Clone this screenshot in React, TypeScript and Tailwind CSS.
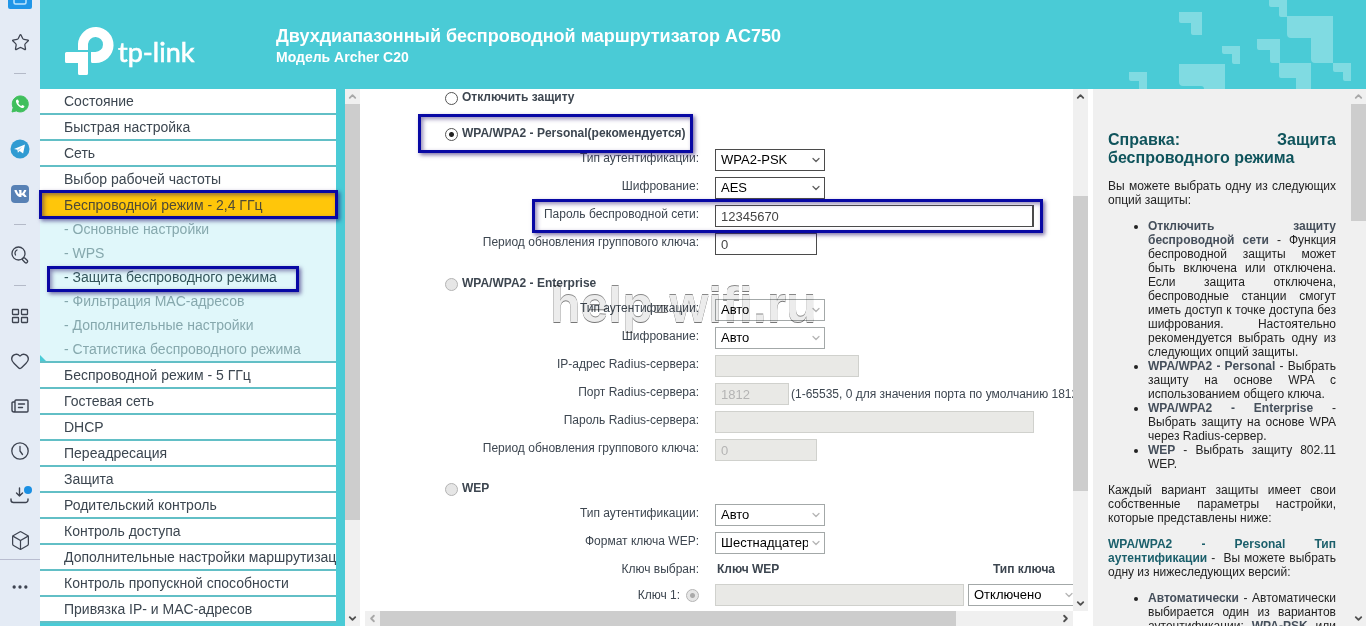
import React, { useId } from 'react';
import { Star, LayoutGrid, Heart, Clock, Box, Ellipsis, ChevronDown, ChevronUp, ChevronLeft, ChevronRight } from 'lucide-react';
import { FaVk } from 'react-icons/fa';

function RailButton({ label, children }: { label: string; children: React.ReactNode }) {
  return (
    <button type="button" aria-label={label} className="flex h-[45px] w-full shrink-0 items-center justify-center text-[#3d4350]">
      {children}
    </button>
  );
}

function RailDivider() {
  return (
    <div className="flex h-4 shrink-0 items-center justify-center">
      <div className="h-px w-3 bg-[#b4bac8]" />
    </div>
  );
}

function Rail() {
  return (
    <nav aria-label="Браузер" className="flex w-10 shrink-0 flex-col overflow-hidden bg-[#e4ebf5]">
      <div className="flex h-5 shrink-0 justify-center">
        <svg width="24" height="10" viewBox="0 0 24 10">
          <path d="M0 0h24v7a2 2 0 0 1-2 2H2a2 2 0 0 1-2-2z" fill="#2196e8" />
          <path d="M6 0v2.500a1.500 1.500 0 0 0 1.500 1.500h9A1.500 1.500 0 0 0 18 2.500V0" fill="none" stroke="#bfe6ff" strokeWidth="1.500" />
        </svg>
      </div>
      <RailButton label="Закладки"><Star size={19} strokeWidth={1.6} /></RailButton>
      <RailDivider />
      <RailButton label="WhatsApp">
        <svg width="18" height="18" viewBox="0 0 18 18">
          <path d="M1 17l1.200-4.300A8 8 0 1 1 5.300 15.900z" fill="#3fbf5c" stroke="#3fbf5c" strokeLinejoin="round" />
          <path d="M6 4.600c-.9.500-1.300 1.500-.9 2.700.9 2.700 2.900 4.700 5.600 5.600 1.200.4 2.200-.1 2.600-1.200l.1-.7-2.100-1.100-1.100 1.100c-1.400-.6-2.400-1.600-3-3l.9-1.100-1-2.200z" fill="#fff" />
        </svg>
      </RailButton>
      <RailButton label="Telegram">
        <svg width="20" height="20" viewBox="0 0 20 20">
          <circle cx="10" cy="10" r="9.500" fill="#309bd2" />
          <path d="M4 9.900L15 5.500l-1.900 9-3.500-2.400-1.700 1.700-.5-3z" fill="#fff" />
          <path d="M7.500 10.900l4.700-3.200-3.500 4z" fill="#a9d3ec" />
        </svg>
      </RailButton>
      <RailButton label="VK">
        <span className="flex size-[18px] items-center justify-center rounded bg-[#5781b5] text-white"><FaVk size={13} /></span>
      </RailButton>
      <RailDivider />
      <RailButton label="Поиск">
        <svg width="18" height="18" viewBox="0 0 18 18" fill="none" stroke="currentColor" strokeWidth="1.300" strokeLinecap="round">
          <circle cx="7.500" cy="7.500" r="6.500" />
          <path d="M4.500 9a3.500 3.500 0 0 1 1.500-5" />
          <rect x="11" y="12.800" width="6" height="3" rx="1.500" transform="rotate(45 14 14.300)" />
        </svg>
      </RailButton>
      <RailDivider />
      <RailButton label="Экспресс-панель">
        <svg width="18" height="16" viewBox="0 0 18 16" fill="none" stroke="currentColor" strokeWidth="1.300">
          <rect x="1.500" y="1.500" width="6" height="5" rx="0.500" />
          <rect x="10.500" y="1.500" width="6" height="5" rx="0.500" />
          <rect x="1.500" y="9.500" width="6" height="5" rx="0.500" />
          <rect x="10.500" y="9.500" width="6" height="5" rx="0.500" />
        </svg>
      </RailButton>
      <RailButton label="Избранное"><Heart size={20} strokeWidth={1.6} /></RailButton>
      <RailButton label="Новости">
        <svg width="18" height="14" viewBox="0 0 18 14" fill="none" stroke="currentColor" strokeWidth="1.400" strokeLinecap="round" strokeLinejoin="round">
          <path d="M4 3H2A1 1 0 0 0 1 4v7a2 2 0 0 0 2 2h13a1 1 0 0 0 1-1V2a1 1 0 0 0-1-1H5A1 1 0 0 0 4 2v9a1.500 1.500 0 0 1-1.500 2" />
          <path d="M7.500 5h6M7.500 8.500h4" />
        </svg>
      </RailButton>
      <RailButton label="История">
        <svg width="18" height="18" viewBox="0 0 18 18" fill="none" stroke="currentColor" strokeWidth="1.300" strokeLinecap="round" strokeLinejoin="round">
          <circle cx="9" cy="9" r="8.200" />
          <path d="M9 4.500V9l2.500 3.500" />
        </svg>
      </RailButton>
      <RailButton label="Загрузки">
        <svg width="26" height="20" viewBox="0 0 26 20" fill="none" stroke="currentColor" strokeWidth="1.400" strokeLinecap="round" strokeLinejoin="round">
          <path d="M12.500 2v8M9.500 7l3 3 3-3M4 13v1a2.500 2.500 0 0 0 2.500 2.500h12a2.500 2.500 0 0 0 2.500-2.500v-1" />
          <circle cx="21" cy="4" r="4" fill="#1a8fe3" stroke="none" />
        </svg>
      </RailButton>
      <div className="h-[42px] shrink-0 overflow-hidden border-b border-[#b9bdd0]">
        <RailButton label="Расширения"><Box size={21} strokeWidth={1.4} /></RailButton>
      </div>
      <div className="pt-1">
        <RailButton label="Ещё"><Ellipsis size={20} strokeWidth={2} /></RailButton>
      </div>
    </nav>
  );
}

function Header() {
  return (
    <header className="flex h-[89px] shrink-0 items-start justify-between overflow-hidden bg-[#4acbd6]">
      <div className="flex">
        <svg className="ml-6 mt-5 shrink-0" width="132" height="60" viewBox="0 0 132 60" role="img" aria-label="tp-link">
          <path d="M2.500 32H24v21.500a1.500 1.500 0 0 1-1.500 1.500h-7A1.500 1.500 0 0 1 14 53.500V43H2.500A1.500 1.500 0 0 1 1 41.500v-8A1.500 1.500 0 0 1 2.500 32z" fill="#fff" />
          <path d="M14 30V24A17.800 18 0 1 1 31.500 43H28.500A1.500 1.500 0 0 1 27 41.500V32h4.500A7.500 7.500 0 1 0 24 24v6z" fill="#fff" />
          <text x="54" y="42" fill="#fff" stroke="#fff" strokeWidth="0.600" fontFamily="Lato, sans-serif" fontSize="27">tp-link</text>
        </svg>
        <div className="ml-20 mt-6 font-bold text-white">
          <h1 className="text-lg leading-6 whitespace-nowrap">Двухдиапазонный беспроводной маршрутизатор AC750</h1>
          <p className="text-sm leading-[18px]">Модель Archer C20</p>
        </div>
      </div>
      <svg className="shrink-0" width="242" height="89" viewBox="0 0 242 89" fill="#80dbe2">
        <path d="M55 12h23v23h-9a2 2 0 0 1-2-2V23H57a2 2 0 0 1-2-2z" />
        <path d="M98 46h18v18h-6a2 2 0 0 1-2-2v-8h-8a2 2 0 0 1-2-2z" />
        <path d="M5 72h18v17h-8v-8H7a2 2 0 0 1-2-2z" />
        <path d="M55 64h46v25H80a3 3 0 0 0-3-3H59a4 4 0 0 1-4-4z" />
        <path d="M145 0h18v17h-6a2 2 0 0 1-2-2V7h-8a2 2 0 0 1-2-2z" />
        <path d="M163 16h46v47h-18a4 4 0 0 1-4-4V38h-20a4 4 0 0 1-4-4z" />
        <path d="M133 39h23v24h-8a2 2 0 0 1-2-2V50h-11a2 2 0 0 1-2-2z" />
        <path d="M155 63h32v26h-15V78h-15a2 2 0 0 1-2-2z" />
        <path d="M209 63h18v18h-6a2 2 0 0 1-2-2v-7h-8a2 2 0 0 1-2-2z" />
      </svg>
    </header>
  );
}

const topMenu = ['Состояние', 'Быстрая настройка', 'Сеть', 'Выбор рабочей частоты'];
const subMenu = ['Основные настройки', 'WPS', 'Защита беспроводного режима', 'Фильтрация MAC-адресов', 'Дополнительные настройки', 'Статистика беспроводного режима'];
const bottomMenu = ['Беспроводной режим - 5 ГГц', 'Гостевая сеть', 'DHCP', 'Переадресация', 'Защита', 'Родительский контроль', 'Контроль доступа', 'Дополнительные настройки маршрутизации', 'Контроль пропускной способности', 'Привязка IP- и MAC-адресов'];

function MenuLink({ children }: { children: React.ReactNode }) {
  return (
    <a href="#" className="block h-[26px] shrink-0 overflow-hidden border-b-2 border-[#62bfc6] bg-white pl-6 text-sm leading-6 whitespace-nowrap text-[#3c4650]">
      {children}
    </a>
  );
}

function Marker({ className }: { className: string }) {
  return <div className={`pointer-events-none absolute z-10 border-[3px] border-[#0808a4] shadow-[2px_2px_4px_rgba(40,20,110,0.6),inset_2px_2px_4px_rgba(40,20,110,0.5)] ${className}`} />;
}

function Menu() {
  return (
    <nav aria-label="Меню" className="flex w-[296px] shrink-0 flex-col">
      {topMenu.map((t) => <MenuLink key={t}>{t}</MenuLink>)}
      <div className="relative shrink-0">
        <a href="#" className="block h-6 bg-[#ffc60a] pl-6 text-sm leading-6 text-[#4f4a35]">Беспроводной режим - 2,4 ГГц</a>
        <Marker className="-top-[3px] -right-0.5 -bottom-0.5 -left-px" />
      </div>
      <div className="relative shrink-0 border-b-2 border-[#62bfc6] bg-[#e0f7fa]">
        {subMenu.map((t) => (
          <div key={t} className="relative">
            <a href="#" className={`block h-6 pl-6 text-sm leading-6 ${t.startsWith('Защита') ? 'text-[#35575c]' : 'text-[#86a8ad]'}`}>- {t}</a>
            {t.startsWith('Защита') && <Marker className="top-px right-[37px] -bottom-[3px] left-[7px]" />}
          </div>
        ))}
        <svg className="absolute bottom-0 left-0" width="6" height="6" viewBox="0 0 6 6"><path d="M0 0l6 6H0z" fill="#4acbd6" /></svg>
      </div>
      {bottomMenu.map((t) => <MenuLink key={t}>{t}</MenuLink>)}
    </nav>
  );
}

function VScroll({ pad, thumb, upActive }: { pad: string; thumb: string; upActive?: boolean }) {
  return (
    <div className="flex w-[15px] shrink-0 flex-col bg-[#f0f0f0]">
      <button type="button" aria-label="Вверх" className={`flex h-[15px] shrink-0 items-center justify-center ${upActive ? 'text-[#505050]' : 'text-[#a8a8a8]'}`}><ChevronUp size={11} strokeWidth={4} /></button>
      <div className="min-h-0 flex-1 overflow-hidden">
        <div className={pad} />
        <div className={`bg-[#cdcdcd] ${thumb}`} />
      </div>
      <button type="button" aria-label="Вниз" className="flex h-[15px] shrink-0 items-center justify-center text-[#505050]"><ChevronDown size={11} strokeWidth={4} /></button>
    </div>
  );
}

function Row({ label, children }: { label: string; children: (id: string) => React.ReactNode }) {
  const id = useId();
  return (
    <div className="flex h-7 shrink-0 items-center">
      <label htmlFor={id} className="w-[339px] shrink-0 pb-1 text-right text-xs whitespace-nowrap">{label}</label>
      <div className="ml-4 flex items-center">{children(id)}</div>
    </div>
  );
}

function Select({ id, label, value, disabled, className = 'w-[110px]' }: { id?: string; label?: string; value: string; disabled?: boolean; className?: string }) {
  return (
    <div className={`relative shrink-0 ${className}`}>
      <select id={id} aria-label={label} className={`block h-[22px] w-full appearance-none border bg-white pr-4 pl-[5px] text-[13px] leading-5 text-black ${disabled ? 'border-[#a3a8a8]' : 'border-[#4b4b4b]'}`}>
        <option>{value}</option>
      </select>
      <ChevronDown size={12} strokeWidth={2.5} className={`pointer-events-none absolute top-[5px] right-[3px] ${disabled ? 'text-[#b5b5b5]' : 'text-[#606060]'}`} />
    </div>
  );
}

function Field({ id, label, value, disabled, className }: { id?: string; label?: string; value: string; disabled?: boolean; className: string }) {
  return (
    <input
      id={id}
      aria-label={label}
      type="text"
      defaultValue={value}
      disabled={disabled}
      className={`h-[22px] shrink-0 border px-[5px] text-[13px] ${disabled ? 'border-[#d0d1cd] bg-[#e9e9e6] text-[#b4b4b4]' : 'border-[#4b4b4b] bg-white text-[#444]'} ${className}`}
    />
  );
}

const radioBase = 'size-[13px] shrink-0 appearance-none rounded-full border';

function Mode({ label, checked, dim, className }: { label: string; checked?: boolean; dim?: boolean; className: string }) {
  return (
    <label className={`flex shrink-0 items-center gap-1 pl-[85px] text-xs font-bold ${className}`}>
      <input
        type="radio"
        name="mode"
        defaultChecked={checked}
        className={`${radioBase} ${dim ? 'border-[#b4b4b4] bg-[#e6e6e6]' : 'border-[#555] bg-white checked:bg-[radial-gradient(circle,#222_2px,#fff_3px)]'}`}
      />
      <span className="pb-0.5 whitespace-nowrap">{label}</span>
    </label>
  );
}

function Settings() {
  return (
    <form className="relative flex min-h-0 min-w-0 flex-1 flex-col overflow-hidden bg-white text-[#3d4650]">
      <Mode label="Отключить защиту" className="h-[18px]" />
      <div className="relative mt-[15px] shrink-0">
        <Mode label="WPA/WPA2 - Personal(рекомендуется)" checked className="h-6" />
        <Marker className="-top-2 -bottom-[7px] left-[58px] w-[275px]" />
      </div>
      <Row label="Тип аутентификации:">{(id) => <Select id={id} value="WPA2-PSK" />}</Row>
      <Row label="Шифрование:">{(id) => <Select id={id} value="AES" />}</Row>
      <div className="relative shrink-0">
        <Row label="Пароль беспроводной сети:">{(id) => <Field id={id} value="12345670" className="w-[319px] border-r-2" />}</Row>
        <Marker className="-top-[3px] -bottom-[3px] left-[172px] w-[511px]" />
      </div>
      <Row label="Период обновления группового ключа:">{(id) => <Field id={id} value="0" className="w-[102px]" />}</Row>

      <Mode label="WPA/WPA2 - Enterprise" dim className="mt-3.5 h-6" />
      <Row label="Тип аутентификации:">{(id) => <Select id={id} value="Авто" disabled />}</Row>
      <Row label="Шифрование:">{(id) => <Select id={id} value="Авто" disabled />}</Row>
      <Row label="IP-адрес Radius-сервера:">{(id) => <Field id={id} value="" disabled className="w-36" />}</Row>
      <Row label="Порт Radius-сервера:">
        {(id) => (
          <>
            <Field id={id} value="1812" disabled className="w-[74px]" />
            <span className="ml-0.5 text-xs whitespace-nowrap">(1-65535, 0 для значения порта по умолчанию 1812)</span>
          </>
        )}
      </Row>
      <Row label="Пароль Radius-сервера:">{(id) => <Field id={id} value="" disabled className="w-[319px]" />}</Row>
      <Row label="Период обновления группового ключа:">{(id) => <Field id={id} value="0" disabled className="w-[102px]" />}</Row>

      <Mode label="WEP" dim className="mt-[13px] h-6" />
      <Row label="Тип аутентификации:">{(id) => <Select id={id} value="Авто" disabled />}</Row>
      <Row label="Формат ключа WEP:">{(id) => <Select id={id} value="Шестнадцатеричный" disabled />}</Row>
      <div className="flex h-6 shrink-0 items-center text-xs font-bold whitespace-nowrap">
        <span className="w-[339px] shrink-0 text-right font-normal">Ключ выбран:</span>
        <span className="ml-[18px] w-[276px] shrink-0">Ключ WEP</span>
        <span>Тип ключа</span>
      </div>
      <div className="flex h-7 shrink-0 items-center">
        <label className="flex w-[339px] shrink-0 items-center justify-end gap-1.5 text-xs">
          Ключ 1:
          <input type="radio" name="key" defaultChecked className={`${radioBase} border-[#b4b4b4] bg-[radial-gradient(circle,#aaa_2px,#e6e6e6_3px)]`} />
        </label>
        <div className="ml-4 flex items-center gap-1">
          <Field label="Ключ WEP 1" value="" disabled className="w-[249px]" />
          <Select label="Тип ключа 1" value="Отключено" disabled className="w-[110px]" />
        </div>
      </div>
      <div aria-hidden="true" className="pointer-events-none absolute top-[184px] left-[190px] text-[50px] leading-[64px] font-bold whitespace-nowrap text-[#ececec] mix-blend-multiply [text-shadow:0_1px_0_#777,0_-1px_0_#888]">
        help-wifi.ru
      </div>
    </form>
  );
}

function Term({ children }: { children: React.ReactNode }) {
  return <b className="text-[#454f5b]">{children}</b>;
}

function Help() {
  return (
    <aside className="w-[258px] shrink-0 overflow-hidden bg-[#f0f0f0] px-[15px] text-justify text-xs leading-[14px] text-[#222]">
      <h2 className="mt-[42px] text-base leading-[18px] font-bold text-[#0f545c]">Справка: Защита беспроводного режима</h2>
      <p className="mt-3">Вы можете выбрать одну из следующих опций защиты:</p>
      <ul className="mt-3 list-disc pl-10">
        <li><Term>Отключить защиту беспроводной сети</Term> - Функция беспроводной защиты может быть включена или отключена. Если защита отключена, беспроводные станции смогут иметь доступ к точке доступа без шифрования. Настоятельно рекомендуется выбрать одну из следующих опций защиты.</li>
        <li><Term>WPA/WPA2 - Personal</Term> - Выбрать защиту на основе WPA с использованием общего ключа.</li>
        <li><Term>WPA/WPA2 - Enterprise</Term> - Выбрать защиту на основе WPA через Radius-сервер.</li>
        <li><Term>WEP</Term> - Выбрать защиту 802.11 WEP.</li>
      </ul>
      <p className="mt-3">Каждый вариант защиты имеет свои собственные параметры настройки, которые представлены ниже:</p>
      <p className="mt-3"><b className="text-[#1b5f6b]">WPA/WPA2 - Personal Тип аутентификации</b> -&nbsp; Вы можете выбрать одну из нижеследующих версий:</p>
      <ul className="mt-3 list-disc pl-10">
        <li><Term>Автоматически</Term> - Автоматически выбирается один из вариантов аутентификации: <Term>WPA-PSK</Term> или <Term>WPA2-PSK</Term>.</li>
      </ul>
    </aside>
  );
}

export default function App() {
  return (
    <div className="flex h-screen overflow-hidden bg-[#4acbd6] font-['Liberation_Sans',Arial,sans-serif]">
      <Rail />
      <div className="flex min-w-0 flex-1 flex-col">
        <Header />
        <div className="flex min-h-0 flex-1">
          <Menu />
          <div className="ml-[9px] flex">
            <VScroll pad="h-0" thumb="h-[416px]" />
          </div>
          <main className="flex min-w-0 flex-1 bg-white">
            <div className="flex min-w-0 flex-1 flex-col">
              <Settings />
              <div className="ml-[5px] flex h-[15px] shrink-0 bg-[#f0f0f0]">
                <button type="button" aria-label="Влево" className="flex w-[15px] items-center justify-center text-[#a8a8a8]"><ChevronLeft size={11} strokeWidth={4} /></button>
                <div className="flex flex-1"><div className="w-[85%] bg-[#cdcdcd]" /></div>
                <button type="button" aria-label="Вправо" className="flex w-[15px] items-center justify-center text-[#505050]"><ChevronRight size={11} strokeWidth={4} /></button>
              </div>
            </div>
            <div className="mb-[15px] flex">
              <VScroll pad="h-[92px]" thumb="h-[295px]" upActive />
            </div>
          </main>
          <div className="w-[5px] shrink-0 bg-white" />
          <Help />
          <VScroll pad="h-0" thumb="h-[117px]" />
        </div>
      </div>
    </div>
  );
}
